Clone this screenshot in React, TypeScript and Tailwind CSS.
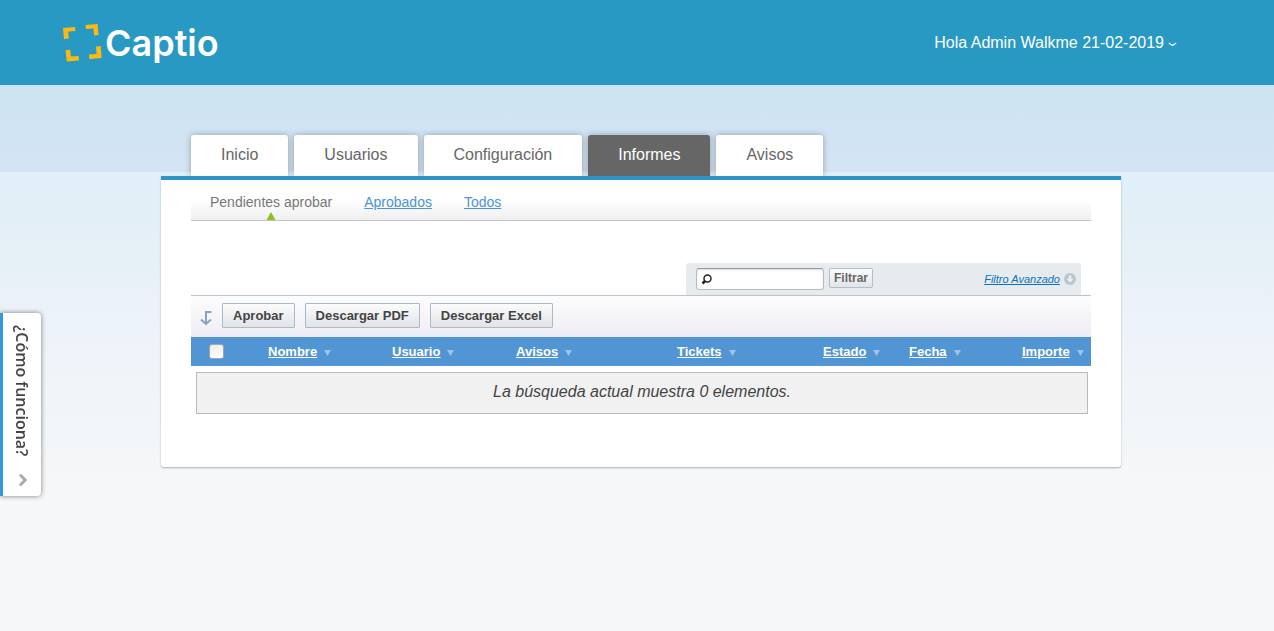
import React from "react";
import { ChevronRight } from "lucide-react";

const tabs = ["Inicio", "Usuarios", "Configuración", "Informes", "Avisos"];
const activeTab = "Informes";

const columns = [
  { label: "Nombre", width: "w-[124px]" },
  { label: "Usuario", width: "w-[124px]" },
  { label: "Avisos", width: "w-[161px]" },
  { label: "Tickets", width: "w-[146px]" },
  { label: "Estado", width: "w-[86px]" },
  { label: "Fecha", width: "w-[113px]" },
  { label: "Importe", width: "w-[69px]" },
];

const actions = ["Aprobar", "Descargar PDF", "Descargar Excel"];

const Logo = () => (
  <a href="#" className="flex items-center gap-[2px] text-white">
    <svg width="40" height="40" viewBox="0 0 40 40" fill="#fdb913" aria-hidden="true">
      <path d="M0 5l12-1 .4 4-7.200.6.600 7-4.800.4z" />
      <path d="M22.500 2l12-1 1.100 11-4.600.4-.6-7-7.500.6z" />
      <path d="M2.600 27.200l4.600-.4.700 6.700 7.700-.6.400 4.500-12.200 1z" />
      <path d="M33 23.400l4.600-.4 1 12-12.300 1-.4-4.400 7.700-.7z" />
    </svg>
    <span className="font-[Inter,sans-serif] text-[36px] font-semibold leading-10">Captio</span>
  </a>
);

const Header = () => (
  <header className="flex h-[85px] items-center justify-between bg-[#2899c2] pl-[63px] pr-[97px]">
    <Logo />
    <button type="button" className="flex items-center gap-1 text-base text-white">
      Hola Admin Walkme 21-02-2019
      <svg width="9" height="5" viewBox="0 0 9 5" className="mt-1" fill="none" aria-hidden="true">
        <path d="M.8 1l3.700 2.600L8.200 1" stroke="currentColor" strokeWidth="1.200" />
      </svg>
    </button>
  </header>
);

const Tabs = () => (
  <nav className="flex gap-[6px] px-[30px]">
    {tabs.map((tab) => (
      <a
        key={tab}
        href="#"
        className={
          tab === activeTab
            ? "h-[41px] rounded-t-[3px] bg-[#666] px-[30px] text-base leading-10 text-white shadow-[0_0_6px_rgba(0,0,0,0.3)]"
            : "h-[41px] rounded-t-[3px] bg-white px-[30px] text-base leading-10 text-[#666] shadow-[0_0_6px_rgba(0,0,0,0.3)]"
        }
      >
        {tab}
      </a>
    ))}
  </nav>
);

const SubNav = () => (
  <nav className="flex h-[41px] gap-8 border-b border-[#c2c7cd] bg-linear-to-b from-white from-50% to-[#efefef] px-[19px] pt-3 text-sm leading-5">
    <span className="relative text-[#777]">
      Pendientes aprobar
      <svg
        width="9"
        height="8"
        viewBox="0 0 9 8"
        className="absolute left-1/2 top-5 -translate-x-1/2"
        aria-hidden="true"
      >
        <path d="M4.500 0L9 8H0z" fill="#8cc21f" />
      </svg>
    </span>
    <a href="#" className="text-[#4a94d8] underline">
      Aprobados
    </a>
    <a href="#" className="text-[#4a94d8] underline">
      Todos
    </a>
  </nav>
);

const FilterBar = () => (
  <form className="ml-auto mr-[10px] mt-[42px] flex h-8 w-[395px] items-center rounded-t-[3px] bg-[#e7ebee] pl-[10px] pr-[5px]">
    <label className="flex h-[22px] w-32 items-center rounded-[3px] border border-[#bbb] border-t-[#999] bg-white px-1 shadow-[inset_0_1px_2px_rgba(0,0,0,0.15)]">
      <svg width="12" height="12" viewBox="0 0 12 12" className="shrink-0" aria-hidden="true">
        <circle cx="6.500" cy="5.500" r="3.500" fill="none" stroke="#222" strokeWidth="1.500" />
        <path d="M4 8L1.500 10.500" stroke="#222" strokeWidth="2.500" />
      </svg>
      <input type="text" aria-label="Buscar" className="ml-1 w-full min-w-0 text-xs outline-none" />
    </label>
    <button
      type="button"
      className="mb-[2px] ml-[5px] h-5 rounded-[2px] border border-[#b0bfcc] bg-linear-to-b from-[#fbfbfc] to-[#e2e5e9] px-1 text-xs font-bold leading-4 text-[#666]"
    >
      Filtrar
    </button>
    <a href="#" className="ml-auto flex items-center gap-1 text-[11px] italic text-[#0b72c0]">
      <span className="underline">Filtro Avanzado</span>
      <svg width="12" height="12" viewBox="0 0 12 12" aria-hidden="true">
        <circle cx="6" cy="6" r="6" fill="#b9c8ce" />
        <path d="M4.800 2.500h2.400v3.200h2.300L6 9.500 2.500 5.700h2.300z" fill="#eef2f4" />
      </svg>
    </a>
  </form>
);

const Toolbar = () => (
  <div className="flex h-[42px] items-center gap-[10px] border-t border-[#b9c3cb] bg-linear-to-b from-[#fdfdfe] to-[#ededf4] pb-[2px] pl-[9px]">
    <svg width="12" height="16" viewBox="0 0 12 16" className="mt-1" fill="none" stroke="#85a5c2" strokeWidth="2" aria-hidden="true">
      <path d="M11.500 2H6v12" />
      <path d="M1 9.500L6 14l5-4.500" />
    </svg>
    {actions.map((action) => (
      <button
        key={action}
        type="button"
        className="h-[25px] rounded-[1px] border border-[#a9bac8] bg-linear-to-b from-[#fcfcfd] to-[#e0e3e7] px-[10px] text-[13px] font-bold leading-5 text-[#444]"
      >
        {action}
      </button>
    ))}
  </div>
);

const ReportsTable = () => (
  <table className="w-full table-fixed">
    <thead>
      <tr className="h-[29px] bg-[#5195d5] text-left text-[13px] leading-5 text-white">
        <th className="w-[77px] pl-[18px]">
          <input
            type="checkbox"
            aria-label="Seleccionar todos"
            className="block size-[15px] appearance-none rounded-[3px] border border-[#a5a5a5] bg-linear-to-b from-[#eee] to-white"
          />
        </th>
        {columns.map((col) => (
          <th key={col.label} className={col.width}>
            <a href="#" className="flex items-center gap-[7px]">
              <span className="underline">{col.label}</span>
              <svg width="7" height="6" viewBox="0 0 7 6" className="mt-[2px] shrink-0" aria-hidden="true">
                <path d="M0 0h7L3.500 6z" fill="#9dc3e8" />
              </svg>
            </a>
          </th>
        ))}
      </tr>
    </thead>
    <tbody>
      <tr>
        <td colSpan={8} className="pl-[5px] pr-[3px] pt-[6px]">
          <p className="h-[42px] border border-[#bbb] bg-[#f1f1f1] text-center text-base italic leading-[38px] text-[#444]">
            La búsqueda actual muestra 0 elementos.
          </p>
        </td>
      </tr>
    </tbody>
  </table>
);

const HelpTab = () => (
  <button
    type="button"
    className="fixed left-0 top-[313px] flex h-[183px] w-[41px] flex-col items-center rounded-r-[4px] border-l-[3px] border-[#3498db] bg-white pt-3 shadow-[0_0_5px_rgba(0,0,0,0.5)]"
  >
    <span className="font-['Open_Sans',sans-serif] text-base font-semibold leading-6 text-[#444] [writing-mode:vertical-rl]">
      ¿Cómo funciona?
    </span>
    <ChevronRight size={18} strokeWidth={4} className="mb-[7px] ml-[2px] mt-auto text-[#aaa]" />
  </button>
);

const App = () => {
  return (
    <div className="min-h-screen bg-[#f6f7f8] font-['Liberation_Sans',Arial,sans-serif]">
      <Header />
      <div className="bg-[linear-gradient(to_bottom,#cce3f2,#d4e4f5_87px,#e0eff8_87px,#e6f0f7_175px,#ecf2fa_225px,#f0f5f8_310px,#f6f7f8_400px)] pb-12 pt-[50px]">
        <div className="mx-auto max-w-[968px] pl-2">
          <Tabs />
          <main className="relative rounded-b-[3px] border-t-4 border-[#2e93c5] bg-white px-[30px] pb-[53px] shadow-[0_1px_2px_rgba(0,0,0,0.3)]">
            <SubNav />
            <FilterBar />
            <Toolbar />
            <ReportsTable />
          </main>
        </div>
      </div>
      <HelpTab />
    </div>
  );
};

export default App;
